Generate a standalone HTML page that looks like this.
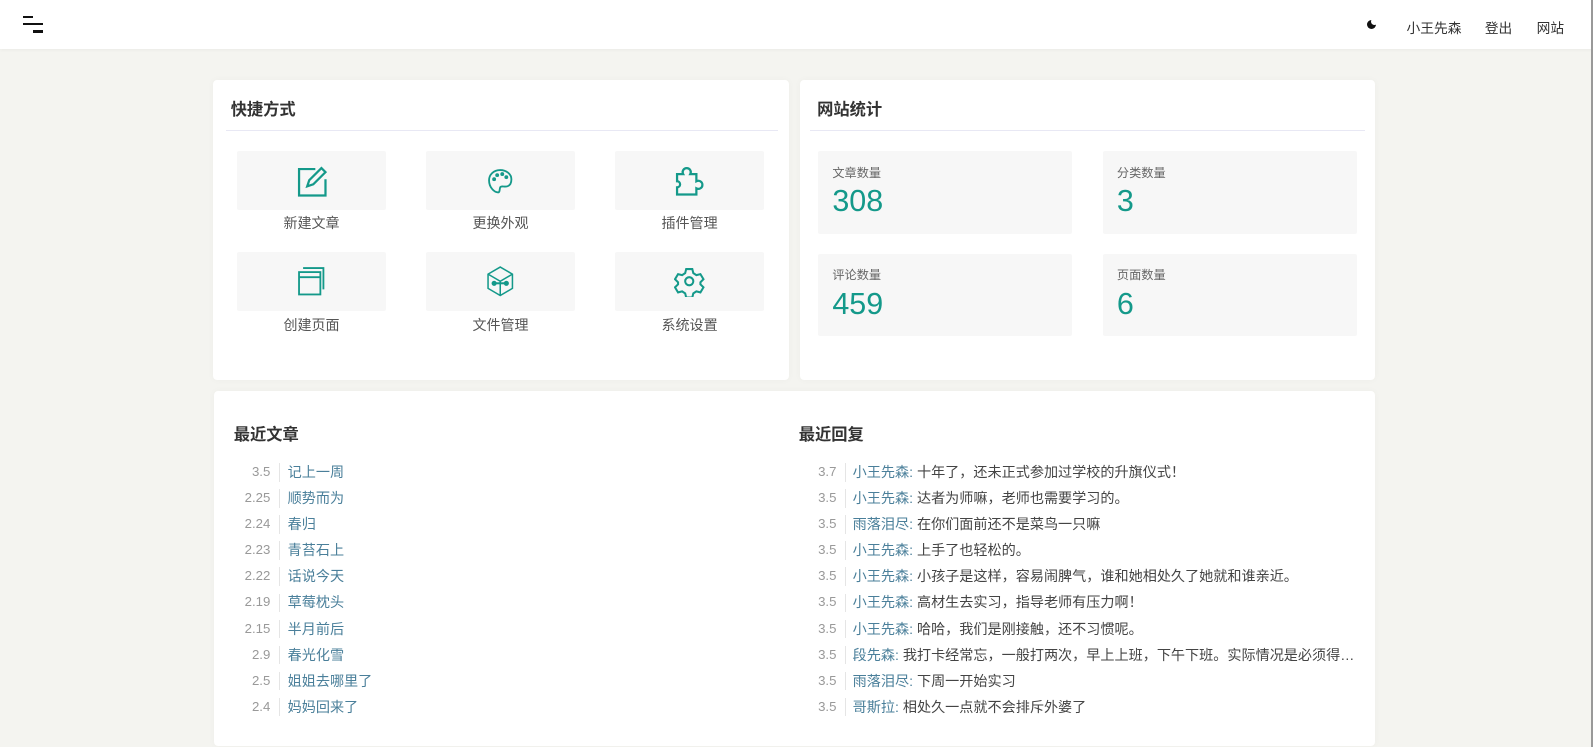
<!DOCTYPE html>
<html><head><meta charset="utf-8"><style>
*{margin:0;padding:0;box-sizing:border-box}
body{width:1593px;height:747px;overflow:hidden;background:#f4f4f0;font-family:"Liberation Sans","Noto Sans CJK SC",sans-serif;font-size:13px;color:#333;position:relative}
#w{position:absolute;left:0;top:0;width:1568px;height:735px;zoom:1.0163}
.hdr{position:absolute;left:0;top:0;width:1600px;height:48px;background:#fff;box-shadow:0 1px 4px rgba(0,0,0,.05)}
.sb{position:absolute;right:0;top:0;width:2px;height:747px;background:#999}
.card{position:absolute;background:#fff;border-radius:4px;box-shadow:0 0 8px rgba(0,0,0,.03)}
.h{position:absolute;font-size:16px;font-weight:bold;color:#333}
.div{position:absolute;height:1px;background:#e8e8f4}
.tile{position:absolute;width:147px;height:58px;background:#f7f7f7;border-radius:2px;display:flex;align-items:center;justify-content:center}
.lbl{position:absolute;width:147px;text-align:center;font-size:13.8px;color:#555}
.st{position:absolute;width:250px;height:81px;background:#f7f7f7;border-radius:2px}
.st .l{position:absolute;left:14px;top:11px;font-size:12px;color:#666}
.st .n{position:absolute;left:14px;top:32px;font-size:30px;color:#14998a}
.row{position:absolute;height:20px;line-height:20px;font-size:13px;white-space:nowrap}
.row .d{position:absolute;right:0;color:#999;text-align:right}
.row .b{position:absolute;top:1px;width:1px;height:18px;background:#e5e5e5}
.row .t{position:absolute;color:#4a7f9a;font-size:13.9px}
.row .c{color:#444}
.nav{position:absolute;top:17px;font-size:13.5px;color:#333}
</style></head><body>
<div id="w">
<div class="hdr">
 <div style="position:absolute;left:23px;top:16px;width:9px;height:2px;background:#111"></div>
 <div style="position:absolute;left:23px;top:23px;width:19px;height:2px;background:#111"></div>
 <div style="position:absolute;left:32px;top:30px;width:10px;height:2px;background:#111"></div>
 <div style="position:absolute;left:1345px;top:20px;width:9px;height:9px;border-radius:50%;background:#111"></div>
 <div style="position:absolute;left:1349px;top:18px;width:7px;height:7px;border-radius:50%;background:#fff"></div>
 <div class="nav" style="left:1384px">小王先森</div>
 <div class="nav" style="left:1461px">登出</div>
 <div class="nav" style="left:1512px">网站</div>
</div>

<div class="card" style="left:210px;top:79px;width:566px;height:295px"></div>
<div class="h" style="left:227px;top:94px">快捷方式</div>
<div class="div" style="left:222px;top:128px;width:544px"></div>

<div class="tile" style="left:233px;top:149px"><svg width="32" height="32" viewBox="0 0 32 32" fill="none" stroke="#14998a" stroke-width="2.2"><path d="M20 4H4v26h26V14"/><path d="M26 3l4 4-12 12-6 2 2-6z"/></svg></div>
<div class="tile" style="left:419px;top:149px"><svg width="28" height="28" viewBox="0 0 28 28" fill="none" stroke="#14998a" stroke-width="1.8"><path d="M14 3C7 3 3 8 3 13c0 7 5 12 9 12 2 0 1-3 2-5s4 0 7-1 4-4 4-7C25 7 20 3 14 3z"/><circle cx="8" cy="12" r="1" fill="#14998a"/><circle cx="11" cy="8" r="1" fill="#14998a"/><circle cx="16" cy="7" r="1" fill="#14998a"/><circle cx="20" cy="10" r="1" fill="#14998a"/></svg></div>
<div class="tile" style="left:605px;top:149px"><svg width="32" height="32" viewBox="0 0 32 32" fill="none" stroke="#14998a" stroke-width="2.2"><path d="M4 9h6a4 4 0 1 1 7 0h6v7a4 4 0 1 1 0 7v6H4v-7a3 3 0 1 0 0-6z"/></svg></div>
<div class="lbl" style="left:233px;top:210px">新建文章</div>
<div class="lbl" style="left:419px;top:210px">更换外观</div>
<div class="lbl" style="left:605px;top:210px">插件管理</div>

<div class="tile" style="left:233px;top:248px"><svg width="28" height="30" viewBox="0 0 28 30" fill="none" stroke="#14998a" stroke-width="1.8"><rect x="2" y="6" width="21" height="22"/><path d="M2 11h21M6 2h20v21"/></svg></div>
<div class="tile" style="left:419px;top:248px"><svg width="30" height="32" viewBox="0 0 30 32" fill="none" stroke="#14998a" stroke-width="1.5"><path d="M15 2l12 7v14l-12 7-12-7V9z"/><path d="M3 9l12 7 12-7M15 16v14"/><path d="M9 18h12" stroke-width="2"/><circle cx="9" cy="18" r="1.8" fill="#14998a"/><circle cx="21" cy="18" r="1.8" fill="#14998a"/></svg></div>
<div class="tile" style="left:605px;top:248px"><svg width="30" height="30" viewBox="0 0 30 30" fill="none" stroke="#14998a" stroke-width="2"><path d="M12 3h6l1 4 3 2 4-1 3 5-3 3v2l3 3-3 5-4-1-3 2-1 4h-6l-1-4-3-2-4 1-3-5 3-3v-2L1 13l3-5 4 1 3-2z"/><circle cx="15" cy="15" r="4"/></svg></div>
<div class="lbl" style="left:233px;top:310px">创建页面</div>
<div class="lbl" style="left:419px;top:310px">文件管理</div>
<div class="lbl" style="left:605px;top:310px">系统设置</div>

<div class="card" style="left:787px;top:79px;width:566px;height:295px"></div>
<div class="h" style="left:804px;top:94px">网站统计</div>
<div class="div" style="left:797px;top:128px;width:546px"></div>
<div class="st" style="left:805px;top:149px"><div class="l">文章数量</div><div class="n">308</div></div>
<div class="st" style="left:1085px;top:149px"><div class="l">分类数量</div><div class="n">3</div></div>
<div class="st" style="left:805px;top:250px"><div class="l">评论数量</div><div class="n">459</div></div>
<div class="st" style="left:1085px;top:250px"><div class="l">页面数量</div><div class="n">6</div></div>

<div class="card" style="left:211px;top:385px;width:1142px;height:349px"></div>
<div class="h" style="left:230px;top:414px">最近文章</div>
<div class="h" style="left:786px;top:414px">最近回复</div>

<div style="position:absolute;left:0;top:455px">
<div class="row" style="left:0;top:0;width:500px"><span class="d" style="right:234px">3.5</span><span class="b" style="left:275px"></span><span class="t" style="left:283px">记上一周</span></div>
<div class="row" style="left:0;top:25.6px;width:500px"><span class="d" style="right:234px">2.25</span><span class="b" style="left:275px"></span><span class="t" style="left:283px">顺势而为</span></div>
<div class="row" style="left:0;top:51.2px;width:500px"><span class="d" style="right:234px">2.24</span><span class="b" style="left:275px"></span><span class="t" style="left:283px">春归</span></div>
<div class="row" style="left:0;top:76.8px;width:500px"><span class="d" style="right:234px">2.23</span><span class="b" style="left:275px"></span><span class="t" style="left:283px">青苔石上</span></div>
<div class="row" style="left:0;top:102.4px;width:500px"><span class="d" style="right:234px">2.22</span><span class="b" style="left:275px"></span><span class="t" style="left:283px">话说今天</span></div>
<div class="row" style="left:0;top:128px;width:500px"><span class="d" style="right:234px">2.19</span><span class="b" style="left:275px"></span><span class="t" style="left:283px">草莓枕头</span></div>
<div class="row" style="left:0;top:153.6px;width:500px"><span class="d" style="right:234px">2.15</span><span class="b" style="left:275px"></span><span class="t" style="left:283px">半月前后</span></div>
<div class="row" style="left:0;top:179.2px;width:500px"><span class="d" style="right:234px">2.9</span><span class="b" style="left:275px"></span><span class="t" style="left:283px">春光化雪</span></div>
<div class="row" style="left:0;top:204.8px;width:500px"><span class="d" style="right:234px">2.5</span><span class="b" style="left:275px"></span><span class="t" style="left:283px">姐姐去哪里了</span></div>
<div class="row" style="left:0;top:230.4px;width:500px"><span class="d" style="right:234px">2.4</span><span class="b" style="left:275px"></span><span class="t" style="left:283px">妈妈回来了</span></div>
</div>

<div style="position:absolute;left:556px;top:455px">
<div class="row" style="left:0;top:0;width:1000px"><span class="d" style="right:733px">3.7</span><span class="b" style="left:275px"></span><span class="t" style="left:283px">小王先森: <span class="c">十年了，还未正式参加过学校的升旗仪式！</span></span></div>
<div class="row" style="left:0;top:25.6px;width:1000px"><span class="d" style="right:733px">3.5</span><span class="b" style="left:275px"></span><span class="t" style="left:283px">小王先森: <span class="c">达者为师嘛，老师也需要学习的。</span></span></div>
<div class="row" style="left:0;top:51.2px;width:1000px"><span class="d" style="right:733px">3.5</span><span class="b" style="left:275px"></span><span class="t" style="left:283px">雨落泪尽: <span class="c">在你们面前还不是菜鸟一只嘛</span></span></div>
<div class="row" style="left:0;top:76.8px;width:1000px"><span class="d" style="right:733px">3.5</span><span class="b" style="left:275px"></span><span class="t" style="left:283px">小王先森: <span class="c">上手了也轻松的。</span></span></div>
<div class="row" style="left:0;top:102.4px;width:1000px"><span class="d" style="right:733px">3.5</span><span class="b" style="left:275px"></span><span class="t" style="left:283px">小王先森: <span class="c">小孩子是这样，容易闹脾气，谁和她相处久了她就和谁亲近。</span></span></div>
<div class="row" style="left:0;top:128px;width:1000px"><span class="d" style="right:733px">3.5</span><span class="b" style="left:275px"></span><span class="t" style="left:283px">小王先森: <span class="c">高材生去实习，指导老师有压力啊！</span></span></div>
<div class="row" style="left:0;top:153.6px;width:1000px"><span class="d" style="right:733px">3.5</span><span class="b" style="left:275px"></span><span class="t" style="left:283px">小王先森: <span class="c">哈哈，我们是刚接触，还不习惯呢。</span></span></div>
<div class="row" style="left:0;top:179.2px;width:1000px"><span class="d" style="right:733px">3.5</span><span class="b" style="left:275px"></span><span class="t" style="left:283px">段先森: <span class="c">我打卡经常忘，一般打两次，早上上班，下午下班。实际情况是必须得…</span></span></div>
<div class="row" style="left:0;top:204.8px;width:1000px"><span class="d" style="right:733px">3.5</span><span class="b" style="left:275px"></span><span class="t" style="left:283px">雨落泪尽: <span class="c">下周一开始实习</span></span></div>
<div class="row" style="left:0;top:230.4px;width:1000px"><span class="d" style="right:733px">3.5</span><span class="b" style="left:275px"></span><span class="t" style="left:283px">哥斯拉: <span class="c">相处久一点就不会排斥外婆了</span></span></div>
</div>
</div>
<div class="sb"></div>
</body></html>
